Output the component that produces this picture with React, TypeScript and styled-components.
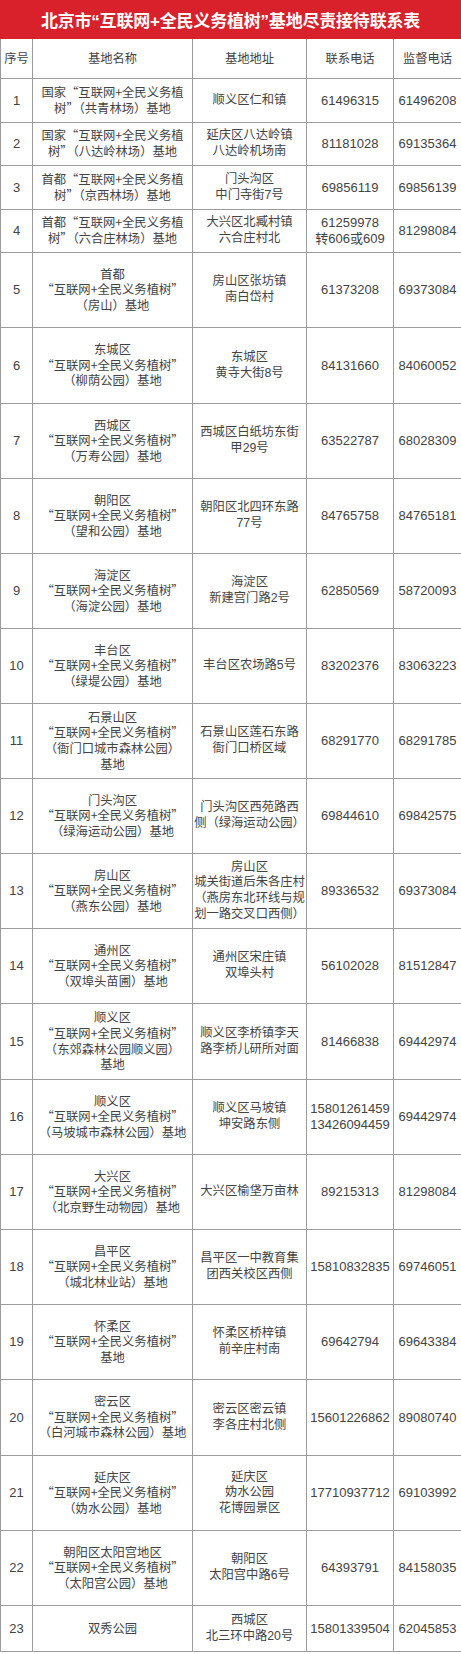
import styled, { createGlobalStyle } from "styled-components";

const GlobalStyle = createGlobalStyle`
  body {
    margin: 0;
    background: #ffffff;
    font-family: "Liberation Sans", "Noto Sans CJK SC", sans-serif;
  }
`;

const Page = styled.div`
  width: 461px;
  overflow: hidden;
`;

const Title = styled.h1`
  margin: 0;
  height: 39px;
  display: flex;
  align-items: center;
  justify-content: center;
  background: #d9212b;
  color: #ffffff;
  font-size: 17px;
  font-weight: 700;
  letter-spacing: -0.2px;
  white-space: nowrap;
`;

const Row = styled.div<{ $h: number }>`
  display: grid;
  grid-template-columns: 33px 160px 114px 87px 67px;
  height: ${(p) => p.$h}px;
`;

const Cell = styled.div<{ $num?: boolean; $cjk?: boolean }>`
  display: flex;
  flex-direction: column;
  align-items: center;
  justify-content: center;
  box-sizing: border-box;
  border-right: 1px solid #9c9c9c;
  border-bottom: 1px solid #9c9c9c;
  color: #434343;
  font-family: ${(p) =>
    p.$cjk
      ? `"Noto Sans CJK SC", "Liberation Sans", sans-serif`
      : `"Liberation Sans", "Noto Sans CJK SC", sans-serif`};
  font-size: ${(p) => (p.$num ? "13px" : "12.3px")};
  line-height: 15.6px;
  text-align: center;

  &:first-child {
    border-left: 1px solid #9c9c9c;
  }
  &:last-child {
    border-right: none;
  }
`;

const Line = styled.span`
  display: block;
  white-space: nowrap;
`;

const Q = "“互联网+全民义务植树”";

type Item = {
  name: string[];
  addr: string[];
  tel: string[];
  sup: string;
  h: number;
};

const rows: Item[] = [
  { name: ["国家“互联网+全民义务植", "树”（共青林场）基地"], addr: ["顺义区仁和镇"], tel: ["61496315"], sup: "61496208", h: 44 },
  { name: ["国家“互联网+全民义务植", "树”（八达岭林场）基地"], addr: ["延庆区八达岭镇", "八达岭机场南"], tel: ["81181028"], sup: "69135364", h: 43 },
  { name: ["首都“互联网+全民义务植", "树”（京西林场）基地"], addr: ["门头沟区", "中门寺街7号"], tel: ["69856119"], sup: "69856139", h: 44 },
  { name: ["首都“互联网+全民义务植", "树”（六合庄林场）基地"], addr: ["大兴区北臧村镇", "六合庄村北"], tel: ["61259978", "转606或609"], sup: "81298084", h: 43 },
  { name: ["首都", Q, "（房山）基地"], addr: ["房山区张坊镇", "南白岱村"], tel: ["61373208"], sup: "69373084", h: 75 },
  { name: ["东城区", Q, "（柳荫公园）基地"], addr: ["东城区", "黄寺大街8号"], tel: ["84131660"], sup: "84060052", h: 76 },
  { name: ["西城区", Q, "（万寿公园）基地"], addr: ["西城区白纸坊东街", "甲29号"], tel: ["63522787"], sup: "68028309", h: 75 },
  { name: ["朝阳区", Q, "（望和公园）基地"], addr: ["朝阳区北四环东路", "77号"], tel: ["84765758"], sup: "84765181", h: 75 },
  { name: ["海淀区", Q, "（海淀公园）基地"], addr: ["海淀区", "新建宫门路2号"], tel: ["62850569"], sup: "58720093", h: 75 },
  { name: ["丰台区", Q, "（绿堤公园）基地"], addr: ["丰台区农场路5号"], tel: ["83202376"], sup: "83063223", h: 75 },
  { name: ["石景山区", Q, "（衙门口城市森林公园）", "基地"], addr: ["石景山区莲石东路", "衙门口桥区域"], tel: ["68291770"], sup: "68291785", h: 75 },
  { name: ["门头沟区", Q, "（绿海运动公园）基地"], addr: ["门头沟区西苑路西", "侧（绿海运动公园）"], tel: ["69844610"], sup: "69842575", h: 75 },
  { name: ["房山区", Q, "（燕东公园）基地"], addr: ["房山区", "城关街道后朱各庄村", "（燕房东北环线与规", "划一路交叉口西侧）"], tel: ["89336532"], sup: "69373084", h: 75 },
  { name: ["通州区", Q, "（双埠头苗圃）基地"], addr: ["通州区宋庄镇", "双埠头村"], tel: ["56102028"], sup: "81512847", h: 75 },
  { name: ["顺义区", Q, "（东郊森林公园顺义园）", "基地"], addr: ["顺义区李桥镇李天", "路李桥儿研所对面"], tel: ["81466838"], sup: "69442974", h: 76 },
  { name: ["顺义区", Q, "（马坡城市森林公园）基地"], addr: ["顺义区马坡镇", "坤安路东侧"], tel: ["15801261459", "13426094459"], sup: "69442974", h: 75 },
  { name: ["大兴区", Q, "（北京野生动物园）基地"], addr: ["大兴区榆垡万亩林"], tel: ["89215313"], sup: "81298084", h: 75 },
  { name: ["昌平区", Q, "（城北林业站）基地"], addr: ["昌平区一中教育集", "团西关校区西侧"], tel: ["15810832835"], sup: "69746051", h: 75 },
  { name: ["怀柔区", Q, "基地"], addr: ["怀柔区桥梓镇", "前辛庄村南"], tel: ["69642794"], sup: "69643384", h: 75 },
  { name: ["密云区", Q, "（白河城市森林公园）基地"], addr: ["密云区密云镇", "李各庄村北侧"], tel: ["15601226862"], sup: "89080740", h: 76 },
  { name: ["延庆区", Q, "（妫水公园）基地"], addr: ["延庆区", "妫水公园", "花博园景区"], tel: ["17710937712"], sup: "69103992", h: 75 },
  { name: ["朝阳区太阳宫地区", Q, "（太阳宫公园）基地"], addr: ["朝阳区", "太阳宫中路6号"], tel: ["64393791"], sup: "84158035", h: 75 },
  { name: ["双秀公园"], addr: ["西城区", "北三环中路20号"], tel: ["15801339504"], sup: "62045853", h: 46 },
];

const Lines = ({ items }: { items: string[] }) => (
  <>
    {items.map((t, i) => (
      <Line key={i}>{t}</Line>
    ))}
  </>
);

export default function App() {
  return (
    <Page>
      <GlobalStyle />
      <Title>北京市“互联网+全民义务植树”基地尽责接待联系表</Title>
      <Row $h={40}>
        <Cell $cjk>序号</Cell>
        <Cell $cjk>基地名称</Cell>
        <Cell $cjk>基地地址</Cell>
        <Cell $cjk>联系电话</Cell>
        <Cell $cjk>监督电话</Cell>
      </Row>
      {rows.map((r, i) => (
        <Row key={i} $h={r.h}>
          <Cell $num>{i + 1}</Cell>
          <Cell $cjk>
            <Lines items={r.name} />
          </Cell>
          <Cell>
            <Lines items={r.addr} />
          </Cell>
          <Cell $num>
            <Lines items={r.tel} />
          </Cell>
          <Cell $num>{r.sup}</Cell>
        </Row>
      ))}
    </Page>
  );
}
